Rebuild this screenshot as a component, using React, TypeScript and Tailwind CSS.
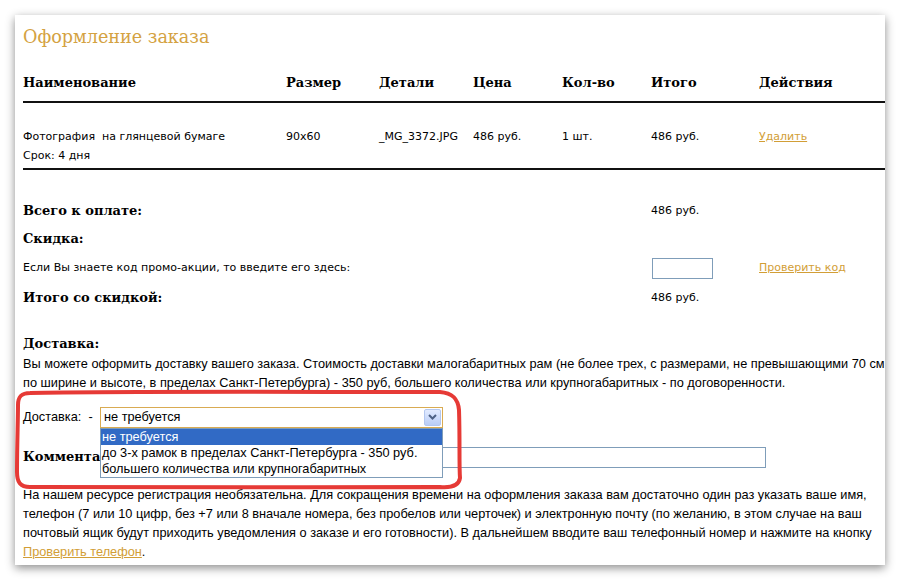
import React from "react";

const serif = { fontFamily: '"DejaVu Serif", "Liberation Serif", serif' };
const sans = { fontFamily: '"DejaVu Sans", "Liberation Sans", sans-serif' };
const para = { fontFamily: '"Liberation Sans", "DejaVu Sans", sans-serif' };

function Chevron() {
  return (
    <svg width="9" height="6" viewBox="0 0 9 6">
      <path d="M1 1 L4.5 4.5 L8 1" fill="none" stroke="#4d6185" strokeWidth="2" />
    </svg>
  );
}

export default function App() {
  const gold = "text-[#d29e36]";
  return (
    <div className="w-[900px] h-[580px] bg-white pt-[15px] pl-[15px] relative overflow-hidden">
      <div
        className="w-[870px] h-[550px] bg-white shadow-[0_3px_9px_rgba(0,0,0,0.45)] relative text-black"
        style={sans}
      >
        <div className="pl-[8px]">
          {/* title */}
          <div className="h-[44px] flex items-center">
            <span className="text-[17.6px] text-[#d4a242]" style={serif}>
              Оформление заказа
            </span>
          </div>
          {/* header row */}
          <div className="h-[42px] flex items-center pt-[6px] text-[13px] font-bold" style={serif}>
            <div className="w-[263px]">Наименование</div>
            <div className="w-[93px]">Размер</div>
            <div className="w-[94px]">Детали</div>
            <div className="w-[89px]">Цена</div>
            <div className="w-[89px]">Кол-во</div>
            <div className="w-[108px]">Итого</div>
            <div>Действия</div>
          </div>
          <div className="h-[2px] bg-[#111]" />
          {/* data row */}
          <div className="h-[65px] flex items-start pt-[24px] text-[11px] leading-[19px]">
            <div className="w-[263px] whitespace-pre">{"Фотография  на глянцевой бумаге\nСрок: 4 дня"}</div>
            <div className="w-[93px]">90x60</div>
            <div className="w-[94px]">_MG_3372.JPG</div>
            <div className="w-[89px]">486 руб.</div>
            <div className="w-[89px]">1 шт.</div>
            <div className="w-[108px]">486 руб.</div>
            <div>
              <a className={`${gold} underline`}>Удалить</a>
            </div>
          </div>
          <div className="h-[2px] bg-[#111]" />
          {/* totals */}
          <div className="mt-[27px] h-[28px] flex items-center">
            <div className="w-[628px] text-[13px] font-bold" style={serif}>Всего к оплате:</div>
            <div className="text-[11px]">486 руб.</div>
          </div>
          <div className="h-[28px] flex items-center">
            <div className="text-[13px] font-bold" style={serif}>Скидка:</div>
          </div>
          <div className="h-[30px] flex items-center">
            <div className="w-[629px] text-[11px]">Если Вы знаете код промо-акции, то введите его здесь:</div>
            <div className="w-[61px] h-[21px] border border-[#7f9db9] bg-white" />
            <div className="ml-[46px] text-[11px]">
              <a className={`${gold} underline`}>Проверить код</a>
            </div>
          </div>
          <div className="h-[30px] flex items-center">
            <div className="w-[628px] text-[13px] font-bold" style={serif}>Итого со скидкой:</div>
            <div className="text-[11px]">486 руб.</div>
          </div>
          {/* delivery */}
          <div className="mt-[21px] h-[20px] flex items-center">
            <div className="text-[13px] font-bold" style={serif}>Доставка:</div>
          </div>
          <div className="text-[12.75px] leading-[19px] whitespace-nowrap" style={para}>
            Вы можете оформить доставку вашего заказа. Стоимость доставки малогабаритных рам (не более трех, с размерами, не превышающими 70 см
            <br />
            по ширине и высоте, в пределах Санкт-Петербурга) - 350 руб, большего количества или крупногабаритных - по договоренности.
          </div>
          <div className="mt-[14px] h-[22px] flex items-center relative" style={para}>
            <div className="w-[77px] text-[12.75px] whitespace-pre">{"Доставка:  -"}</div>
            <div className="w-[343px] h-[21px] border border-[#d9ab52] bg-white flex items-center justify-between pl-[3px] pr-[1px] text-[12.75px]">
              <span>не требуется</span>
              <div className="w-[17px] h-[17px] rounded-[2px] border border-[#b3c7f0] bg-gradient-to-b from-[#e2ebff] to-[#b9cdf7] flex items-center justify-center">
                <Chevron />
              </div>
            </div>
            {/* dropdown list */}
            <div className="absolute left-[77px] top-[22px] w-[343px] h-[50px] border border-[#7f9db9] bg-white z-10 text-[12.75px] leading-[16px] whitespace-nowrap">
              <div className="bg-[#316ac5] text-white pl-[1px]">не требуется</div>
              <div className="pl-[1px]">до 3-х рамок в пределах Санкт-Петербурга - 350 руб.</div>
              <div className="pl-[1px]">большего количества или крупногабаритных</div>
            </div>
          </div>
          <div className="mt-[18px] h-[22px] flex items-center">
            <div className="w-[117px] text-[13px] font-bold" style={serif}>Комментарий:</div>
            <div className="w-[626px] h-[21px] border border-[#7f9db9] bg-white" />
          </div>
          <div className="mt-[17px] text-[12.75px] leading-[19px] whitespace-nowrap" style={para}>
            На нашем ресурсе регистрация необязательна. Для сокращения времени на оформления заказа вам достаточно один раз указать ваше имя,
            <br />
            телефон (7 или 10 цифр, без +7 или 8 вначале номера, без пробелов или черточек) и электронную почту (по желанию, в этом случае на ваш
            <br />
            почтовый ящик будут приходить уведомления о заказе и его готовности). В дальнейшем вводите ваш телефонный номер и нажмите на кнопку
            <br />
            <a className={`${gold} underline`}>Проверить телефон</a>.
          </div>
        </div>
      </div>
      {/* red hand-drawn annotation */}
      <svg className="absolute left-0 top-0 z-20 pointer-events-none" width="900" height="580">
        <path
          d="M30 393 C 120 391, 300 392, 440 392 C 452 393, 458 398, 459 410 C 460 440, 459 465, 460 478 C 459 485, 452 488, 440 487 C 300 487, 120 488, 30 487 C 20 487, 17 482, 17 472 C 17 445, 18 420, 18 405 C 18 396, 22 393, 30 393 Z"
          fill="none"
          stroke="#e63a36"
          strokeWidth="4"
          strokeLinejoin="round"
        />
      </svg>
    </div>
  );
}
